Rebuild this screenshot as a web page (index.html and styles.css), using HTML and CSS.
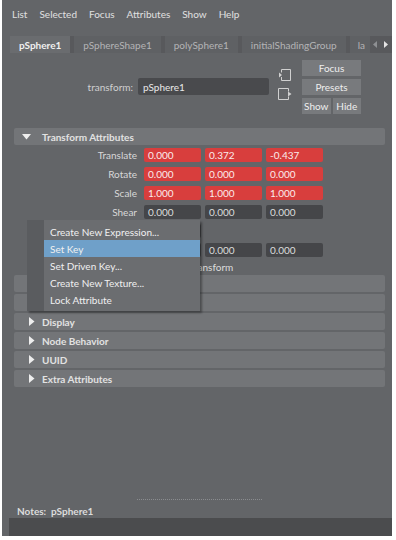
FILE: index.html
```html
<!DOCTYPE html>
<html lang="en">
<head>
  <meta charset="UTF-8">
  <title>Attribute Editor</title>
  <link rel="stylesheet" href="styles.css">
</head>
<body>
  <div class="window">
    <div class="menubar">
      <span>List</span><span>Selected</span><span>Focus</span><span>Attributes</span><span>Show</span><span>Help</span>
    </div>

    <div class="tabbar">
      <div class="tab active">pSphere1</div>
      <div class="tab">pSphereShape1</div>
      <div class="tab">polySphere1</div>
      <div class="tab">initialShadingGroup</div>
      <div class="tab cut">la</div>
      <div class="arrows">
        <svg width="8" height="9" viewBox="0 0 8 9"><path d="M6 1 L2 4.5 L6 8 Z" fill="#8e9093"/></svg>
        <svg width="8" height="9" viewBox="0 0 8 9"><path d="M2 1 L6 4.5 L2 8 Z" fill="#e4e4e4"/></svg>
      </div>
    </div>

    <div class="nodebar">
      <span class="node-label">transform:</span>
      <div class="node-field">pSphere1</div>
      <div class="node-icons">
        <svg width="14" height="12" viewBox="0 0 14 12"><path d="M3.5 3.5 V0.5 H12.5 V11.5 H3.5 V8" fill="none" stroke="#d0d0d0"/><path d="M1 3.5 L4 6 L1 8.5 Z" fill="#d0d0d0"/></svg>
        <svg width="14" height="12" viewBox="0 0 14 12"><path d="M10.5 3.5 V0.5 H0.5 V11.5 H10.5 V8.5" fill="none" stroke="#d0d0d0"/><path d="M10 3.5 L13.5 6 L10 8.5 Z" fill="#d0d0d0"/></svg>
      </div>
      <div class="node-buttons">
        <div class="btn">Focus</div>
        <div class="btn">Presets</div>
        <div class="btn-row">
          <div class="btn">Show</div>
          <div class="btn">Hide</div>
        </div>
      </div>
    </div>

    <div class="scroll">
      <div class="frame open">
        <div class="frame-head">
          <svg class="tri" width="9" height="6" viewBox="0 0 9 6"><path d="M0 0 H9 L4.5 5.5 Z" fill="#eeeeee"/></svg>
          <span>Transform Attributes</span>
        </div>
        <div class="frame-body">
          <div class="attr">
            <span class="attr-label">Translate</span>
            <div class="field keyed">0.000</div><div class="field keyed">0.372</div><div class="field keyed">-0.437</div>
          </div>
          <div class="attr">
            <span class="attr-label">Rotate</span>
            <div class="field keyed">0.000</div><div class="field keyed">0.000</div><div class="field keyed">0.000</div>
          </div>
          <div class="attr">
            <span class="attr-label">Scale</span>
            <div class="field keyed">1.000</div><div class="field keyed">1.000</div><div class="field keyed">1.000</div>
          </div>
          <div class="attr">
            <span class="attr-label">Shear</span>
            <div class="field">0.000</div><div class="field">0.000</div><div class="field">0.000</div>
          </div>
          <div class="attr">
            <span class="attr-label"></span>
            <div class="field"></div>
          </div>
          <div class="attr">
            <span class="attr-label"></span>
            <div class="field"></div><div class="field">0.000</div><div class="field">0.000</div>
          </div>
          <div class="attr short">
            <span class="attr-label"></span>
            <span class="check-text">ransform</span>
          </div>
        </div>
      </div>

      <div class="frame"><div class="frame-head"><svg class="tri" width="6" height="9" viewBox="0 0 6 9"><path d="M0 0 L5.5 4.5 L0 9 Z" fill="#eeeeee"/></svg></div></div>
      <div class="frame"><div class="frame-head"><svg class="tri" width="6" height="9" viewBox="0 0 6 9"><path d="M0 0 L5.5 4.5 L0 9 Z" fill="#eeeeee"/></svg></div></div>
      <div class="frame"><div class="frame-head"><svg class="tri" width="6" height="9" viewBox="0 0 6 9"><path d="M0 0 L5.5 4.5 L0 9 Z" fill="#eeeeee"/></svg><span>Display</span></div></div>
      <div class="frame"><div class="frame-head"><svg class="tri" width="6" height="9" viewBox="0 0 6 9"><path d="M0 0 L5.5 4.5 L0 9 Z" fill="#eeeeee"/></svg><span>Node Behavior</span></div></div>
      <div class="frame"><div class="frame-head"><svg class="tri" width="6" height="9" viewBox="0 0 6 9"><path d="M0 0 L5.5 4.5 L0 9 Z" fill="#eeeeee"/></svg><span>UUID</span></div></div>
      <div class="frame"><div class="frame-head"><svg class="tri" width="6" height="9" viewBox="0 0 6 9"><path d="M0 0 L5.5 4.5 L0 9 Z" fill="#eeeeee"/></svg><span>Extra Attributes</span></div></div>

      <div class="popup">
        <div class="popup-item">Create New Expression...</div>
        <div class="popup-item hot">Set Key</div>
        <div class="popup-item">Set Driven Key...</div>
        <div class="popup-item">Create New Texture...</div>
        <div class="popup-item">Lock Attribute</div>
      </div>
    </div>

    <div class="notes">
      <div class="splitter"></div>
      <div class="notes-label">Notes:&nbsp; pSphere1</div>
      <div class="notes-area"></div>
    </div>
  </div>
</body>
</html>
```

FILE: styles.css
```css
body {
  margin: 0;
  background-color: #ffffff;
  font-family: Lato, "Open Sans", sans-serif;
  font-size: 10px;
}

.window {
  width: 390px;
  height: 536px;
  margin-left: 2px;
  background-color: #636568;
  color: #dcdcdc;
  display: flex;
  flex-direction: column;
}

/* menu bar */
.menubar {
  height: 28px;
  display: flex;
  align-items: center;
  gap: 12px;
  padding-left: 10px;
  color: #e0e0e0;
}

/* tabs */
.tabbar {
  height: 17px;
  margin: 8px 0 0 8px;
  background-color: #58595c;
  display: flex;
  align-items: stretch;
}

.tab {
  padding: 0 9px;
  display: flex;
  align-items: center;
  color: #b4b4b6;
  background-color: #5f6164;
  margin-right: 4px;
}

.tab.active {
  background-color: #6a6c6f;
  color: #f0f0f0;
  font-weight: bold;
}

.tab.cut {
  padding: 0 0 0 8px;
  width: 12px;
  overflow: hidden;
  margin-right: 0;
}

.arrows {
  display: flex;
  align-items: center;
  gap: 3px;
  padding-left: 1px;
}

/* node name + buttons */
.nodebar {
  height: 67px;
  display: flex;
  align-items: center;
}

.node-label {
  width: 131px;
  text-align: right;
  color: #d0d0d0;
}

.node-field {
  width: 126px;
  height: 17px;
  margin-left: 5px;
  padding-left: 5px;
  background-color: #494a4d;
  border-radius: 2px;
  display: flex;
  align-items: center;
  color: #e8e8e8;
}

.node-icons {
  display: flex;
  flex-direction: column;
  gap: 7px;
  margin: -5px 0 0 9px;
}

.node-buttons {
  width: 59px;
  margin-left: 10px;
  display: flex;
  flex-direction: column;
  gap: 3px;
}

.btn {
  height: 16px;
  background-color: #787a7d;
  color: #eeeeee;
  display: flex;
  align-items: center;
  justify-content: center;
}

.btn-row {
  display: flex;
  gap: 2px;
}

.btn-row .btn {
  flex: 1;
}

/* attribute frames */
.scroll {
  position: relative;
  flex: 1;
  padding: 8px 7px 0 12px;
  display: flex;
  flex-direction: column;
  gap: 2px;
}

.frame-head {
  height: 17px;
  background-color: #737578;
  border-radius: 2px;
  display: flex;
  align-items: center;
  font-weight: bold;
  color: #e2e2e2;
}

.frame-head .tri {
  width: 20px;
  margin-left: 8px;
}

.frame.open .frame-head .tri {
  width: 9px;
  margin: 0 11px 0 8px;
}

.frame-body {
  display: flex;
  flex-direction: column;
  gap: 5px;
  padding: 3px 0 1px;
}

.attr {
  height: 14px;
  display: flex;
  align-items: center;
  gap: 4px;
}

.attr.short {
  height: 10px;
}

.attr-label {
  width: 123px;
  margin-right: 3px;
  text-align: right;
  color: #d8d8d8;
}

.field {
  width: 53px;
  height: 14px;
  padding-left: 4px;
  background-color: #454649;
  border-radius: 2px;
  display: flex;
  align-items: center;
  color: #dcdcdc;
}

.field.keyed {
  background-color: #d83e3d;
  color: #fbecec;
}

.check-text {
  margin-left: 50px;
  color: #dcdcdc;
}

/* context menu */
.popup {
  position: absolute;
  left: 25px;
  top: 100px;
  width: 156px;
  padding: 3px 0 3px 0;
  border-left: 17px solid #5a5c5f;
  background-color: #6b6d70;
  box-shadow: 2px 2px 2px rgba(0, 0, 0, 0.35);
  color: #f0f0f0;
}

.popup-item {
  height: 17px;
  padding-left: 6px;
  display: flex;
  align-items: center;
}

.popup-item.hot {
  background-color: #6fa0c9;
}

/* notes */
.notes {
  display: flex;
  flex-direction: column;
}

.splitter {
  width: 125px;
  margin: 0 0 5px 135px;
  border-top: 1px dotted #8a8c8f;
}

.notes-label {
  padding-left: 15px;
  font-weight: bold;
  color: #dcdcdc;
  height: 13px;
  line-height: 13px;
}

.notes-area {
  height: 18px;
  margin-left: 7px;
  background-color: #4b4c4e;
}
```
